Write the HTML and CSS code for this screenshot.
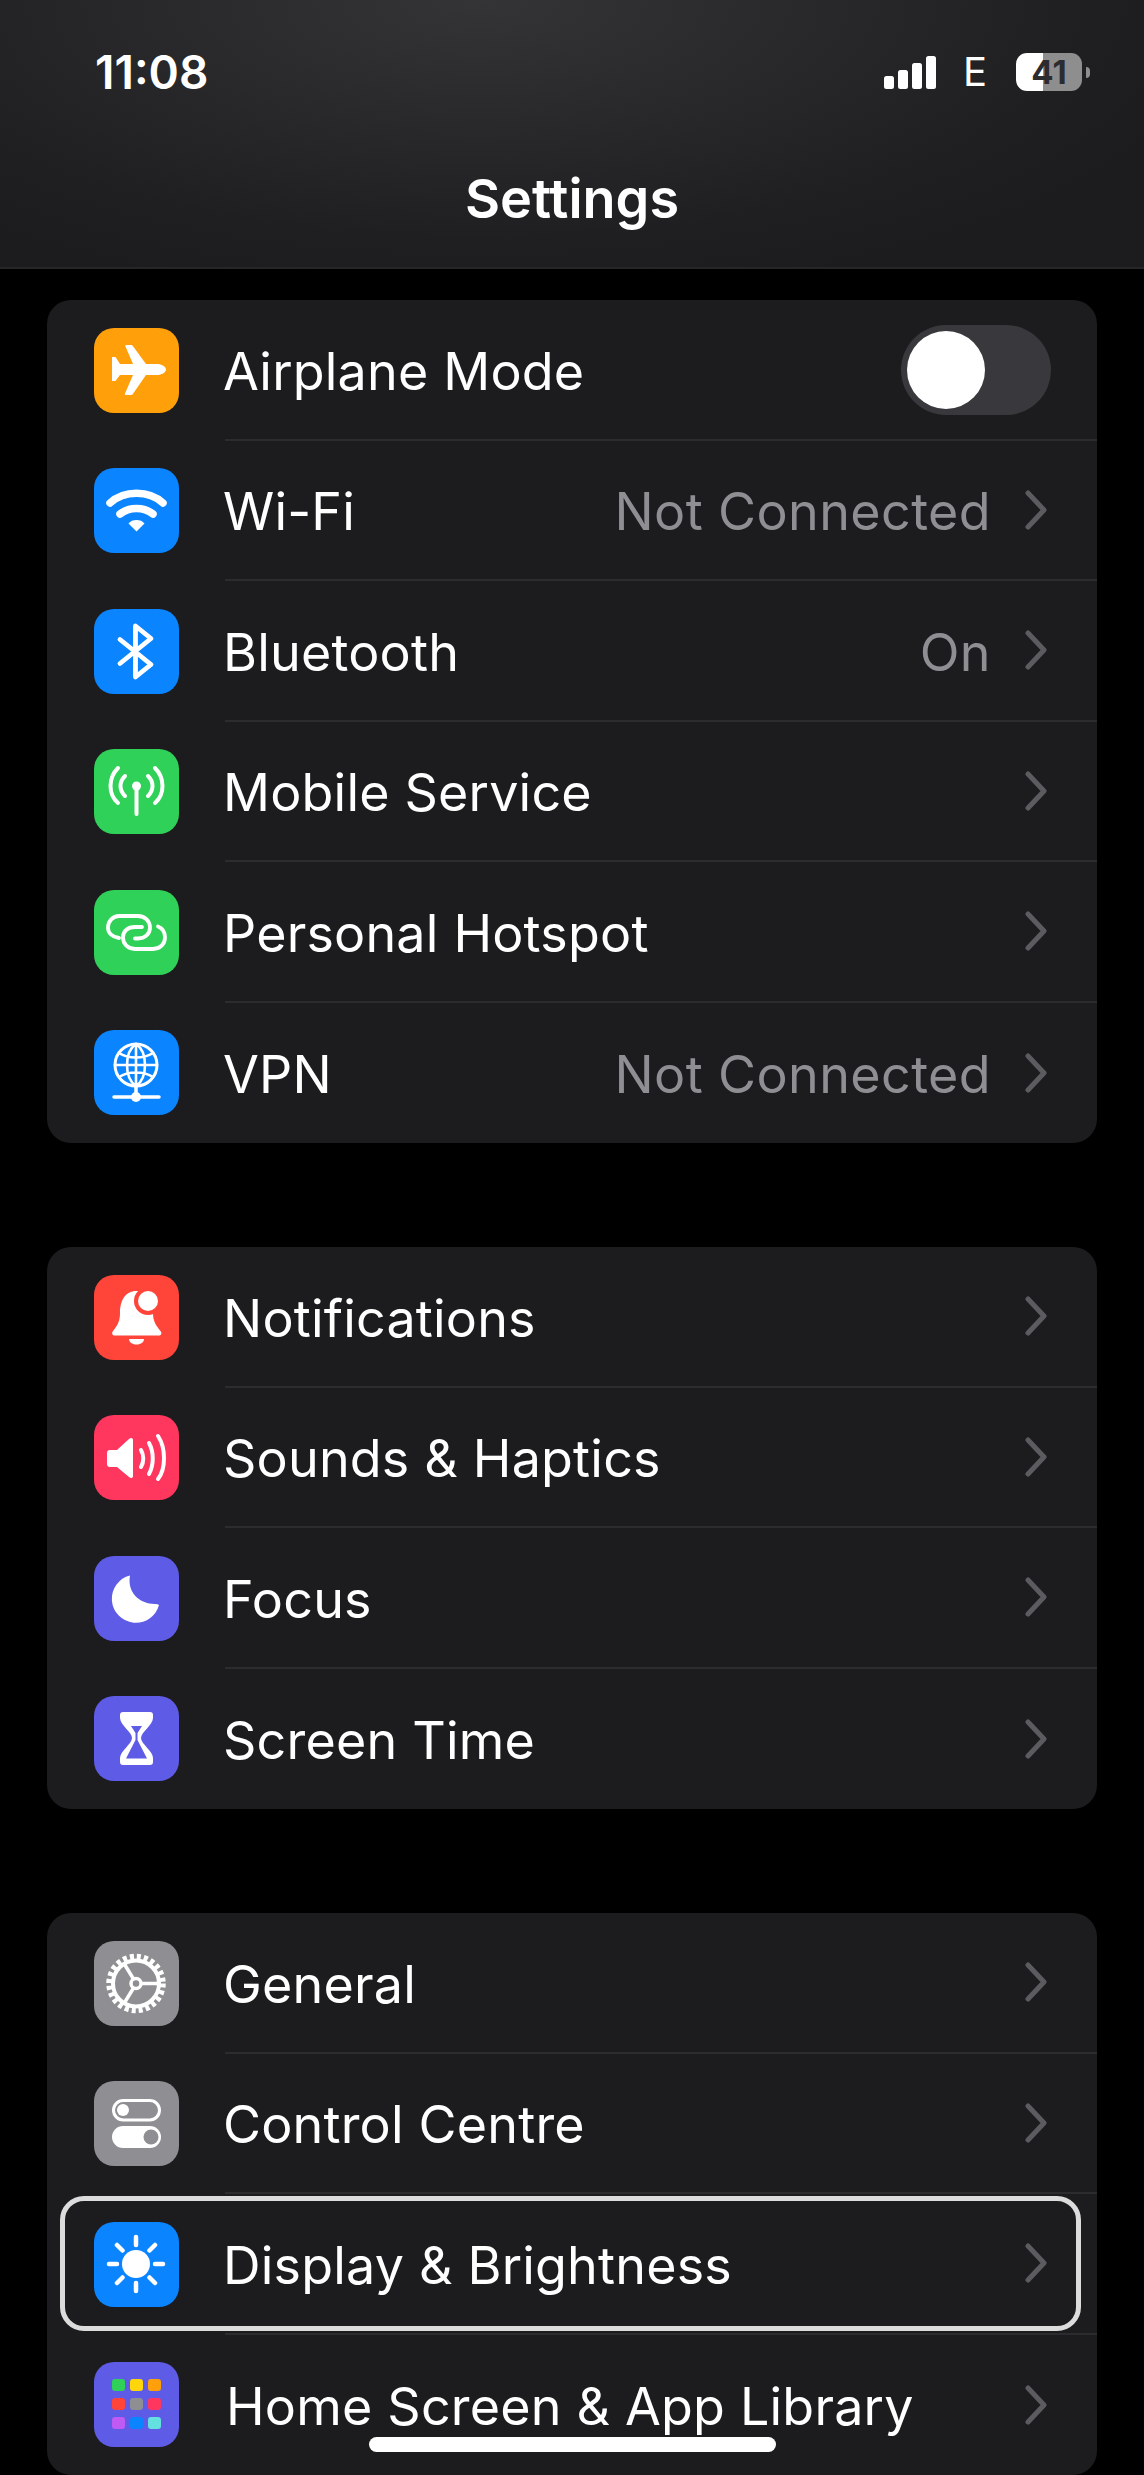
FILE: index.html
```html
<!DOCTYPE html>
<html>
<head>
  <title>Settings</title>
  <link rel="stylesheet" href="styles.css">
</head>
<body>
  <svg class="sprites">
    <symbol id="chev" viewBox="0 0 22 40">
      <polyline points="3,3 19,20 3,37" fill="none" stroke="currentColor" stroke-width="5" stroke-linecap="round" stroke-linejoin="round"/>
    </symbol>
  </svg>

  <header class="top">
    <div class="status">
      <span class="clock">11:08</span>
      <div class="status-right">
        <div class="signal"><i class="b1"></i><i class="b2"></i><i class="b3"></i><i class="b4"></i></div>
        <span class="net">E</span>
        <div class="battery"><span>41</span></div>
        <div class="nub"></div>
      </div>
    </div>
    <h1>Settings</h1>
  </header>

  <main>
    <section class="card">
      <div class="row">
        <div class="icon orange">
          <svg viewBox="0 0 85 85"><path fill="#fff" d="M72 41.500c0-3-4.500-5.500-9-5.500H52L38.500 17.500a2 2 0 0 0-1.500-.5h-4.500c-1 0-1.500.5-1 1.500L39 36H26l-3.500-5.500c-.5-1-1-1.500-2-1.500H18v24h2.500c1 0 1.500-.5 2-1.500L26 47h13l-8 18.500c-.5 1 0 1.500 1 1.500h5c.5 0 1-.2 1.500-.5L52 47h11c4.500 0 9-2.500 9-5.500z"/></svg>
        </div>
        <div class="row-main">
          <span class="label">Airplane Mode</span>
          <div class="toggle"><div class="knob"></div></div>
        </div>
      </div>
      <div class="row">
        <div class="icon blue">
          <svg viewBox="0 0 85 85"><g fill="none" stroke="#fff" stroke-width="7.500" stroke-linecap="round"><path d="M16 35C30 22 55 22 69 35"/><path d="M26 46C35 38.500 50 38.500 59 46"/></g><path fill="#fff" d="M42.500 52c3.500 0 6 1 8 3.500l-8 8-8-8c2-2.500 4.500-3.500 8-3.500z"/></svg>
        </div>
        <div class="row-main">
          <span class="label">Wi-Fi</span>
          <span class="value">Not Connected</span>
          <svg class="chev"><use href="#chev"/></svg>
        </div>
      </div>
      <div class="row">
        <div class="icon blue">
          <svg viewBox="0 0 85 85"><path fill="none" stroke="#fff" stroke-width="4.800" stroke-linecap="round" stroke-linejoin="round" d="M26 30.500L57 55.500 41.500 68V17L57 29.500 26 54.500"/></svg>
        </div>
        <div class="row-main">
          <span class="label">Bluetooth</span>
          <span class="value">On</span>
          <svg class="chev"><use href="#chev"/></svg>
        </div>
      </div>
      <div class="row">
        <div class="icon green">
          <svg viewBox="0 0 85 85"><g fill="none" stroke="#fff" stroke-width="4" stroke-linecap="round"><path d="M42.500 38V65"/><path d="M24 19C14 29 14 45 24 54"/><path d="M61 19C71 29 71 45 61 54"/><path d="M31 27C25 33 25 41 31 47"/><path d="M54 27C60 33 60 41 54 47"/></g><circle cx="42.500" cy="37" r="4.500" fill="#fff"/></svg>
        </div>
        <div class="row-main">
          <span class="label">Mobile Service</span>
          <svg class="chev"><use href="#chev"/></svg>
        </div>
      </div>
      <div class="row">
        <div class="icon green">
          <svg viewBox="0 0 85 85"><g fill="none" stroke="#fff" stroke-width="3.800" stroke-linecap="round"><path d="M25 48C18 47 14 43 14 37.500 14 31 19 26 25 26H44C51 26 56 31 56 37.500 56 44 51 48.500 44 48.500H41"/><path d="M64 36.500C68 38 71 42 71 47.500 71 54 66 59 59 59H41C34 59 29 54 29 47.500 29 41 34 37 41 37H48"/></g></svg>
        </div>
        <div class="row-main">
          <span class="label">Personal Hotspot</span>
          <svg class="chev"><use href="#chev"/></svg>
        </div>
      </div>
      <div class="row">
        <div class="icon blue">
          <svg viewBox="0 0 85 85"><g fill="none" stroke="#fff" stroke-linecap="round"><circle cx="42" cy="35" r="21" stroke-width="3"/><path stroke-width="2.600" d="M42 14C30 22 30 48 42 56M42 14C54 22 54 48 42 56M42 14V56M25 23C34 29 50 29 59 23M21 35H63M25 47C34 41 50 41 59 47"/><path stroke-width="3.500" d="M42 56V67M20 67H65"/></g><circle cx="42" cy="67" r="5" fill="#fff"/></svg>
        </div>
        <div class="row-main last">
          <span class="label">VPN</span>
          <span class="value">Not Connected</span>
          <svg class="chev"><use href="#chev"/></svg>
        </div>
      </div>
    </section>

    <section class="card">
      <div class="row">
        <div class="icon red">
          <svg viewBox="0 0 85 85"><path fill="#fff" d="M42.500 16C31 16 26 26 26 38c0 9-3 13-7 18-1.500 2-1 4.500 1.500 4.500H65c2.500 0 3-2.500 1.500-4.500-4-5-7.500-9-7.500-18 0-12-5-22-16.500-22z"/><path fill="#fff" d="M35 64H50C50 67 47 69.500 42.500 69.500S35 67 35 64z"/><circle cx="54" cy="26" r="14" fill="#ff453a"/><circle cx="54" cy="26" r="10" fill="#fff"/></svg>
        </div>
        <div class="row-main">
          <span class="label">Notifications</span>
          <svg class="chev"><use href="#chev"/></svg>
        </div>
      </div>
      <div class="row">
        <div class="icon pink">
          <svg viewBox="0 0 85 85"><path fill="#fff" d="M13 38c0-2 1-3 3-3h7l12-11c2-2 4-1 4 1v36c0 2-2 3-4 1L23 52h-7c-2 0-3-1-3-3z"/><g fill="none" stroke="#fff" stroke-width="4" stroke-linecap="round"><path d="M47 35C50 40 50 47 47 52"/><path d="M55 28C60 37 60 50 55 59"/><path d="M64 21C72 33 72 54 64 64"/></g></svg>
        </div>
        <div class="row-main">
          <span class="label">Sounds &amp; Haptics</span>
          <svg class="chev"><use href="#chev"/></svg>
        </div>
      </div>
      <div class="row">
        <div class="icon indigo">
          <svg viewBox="0 0 85 85"><path fill="#fff" d="M36 19.500A24 24 0 1 0 65 49C64 48 62.500 48 61 48 45 48 33 36 36 19.500z"/></svg>
        </div>
        <div class="row-main">
          <span class="label">Focus</span>
          <svg class="chev"><use href="#chev"/></svg>
        </div>
      </div>
      <div class="row">
        <div class="icon indigo">
          <svg viewBox="0 0 85 85"><path fill="#fff" d="M29 16H56a3 3 0 0 1 3 3v3c0 7-12 14-12 20s12 13 12 20v4a3 3 0 0 1-3 3H29a3 3 0 0 1-3-3v-4c0-7 12-14 12-20S26 29 26 22v-3a3 3 0 0 1 3-3z"/><path fill="#5e5ce6" d="M37 30H48L43.500 37V44L53 62.500H32L41.500 44V37z"/></svg>
        </div>
        <div class="row-main last">
          <span class="label">Screen Time</span>
          <svg class="chev"><use href="#chev"/></svg>
        </div>
      </div>
    </section>

    <section class="card">
      <div class="row">
        <div class="icon gray">
          <svg viewBox="0 0 85 85"><g fill="none" stroke="#fff"><circle cx="42" cy="42.500" r="26.500" stroke-width="6.500" stroke-dasharray="4 2.940"/><circle cx="42" cy="42.500" r="23" stroke-width="4"/><circle cx="42" cy="42.500" r="5" stroke-width="3.500"/><path stroke-width="3.500" d="M47 42.500H65M39.500 38L30 22.500M39.500 47L30 62.500"/></g></svg>
        </div>
        <div class="row-main">
          <span class="label">General</span>
          <svg class="chev"><use href="#chev"/></svg>
        </div>
      </div>
      <div class="row">
        <div class="icon gray">
          <svg viewBox="0 0 85 85"><rect x="19.500" y="19.500" width="46" height="19.500" rx="9.750" fill="none" stroke="#fff" stroke-width="3"/><circle cx="29" cy="29" r="6" fill="#fff"/><rect x="18" y="45" width="49" height="22" rx="11" fill="#fff"/><circle cx="57" cy="56" r="7.500" fill="#8e8e93"/></svg>
        </div>
        <div class="row-main">
          <span class="label">Control Centre</span>
          <svg class="chev"><use href="#chev"/></svg>
        </div>
      </div>
      <div class="row focused">
        <div class="icon blue">
          <svg viewBox="0 0 85 85"><circle cx="42" cy="42" r="14" fill="#fff"/><path fill="none" stroke="#fff" stroke-width="4.500" stroke-linecap="round" d="M42 15V23M42 61V69M15 42H23M61 42H69M23 23L28.500 28.500M55.500 55.500L61 61M61 23L55.500 28.500M28.500 55.500L23 61"/></svg>
        </div>
        <div class="row-main">
          <span class="label">Display &amp; Brightness</span>
          <svg class="chev"><use href="#chev"/></svg>
        </div>
      </div>
      <div class="row">
        <div class="icon indigo">
          <svg viewBox="0 0 85 85">
            <rect x="18" y="17" width="13" height="12" rx="3" fill="#30d158"/>
            <rect x="36" y="17" width="13" height="12" rx="3" fill="#ffd60a"/>
            <rect x="54" y="17" width="13" height="12" rx="3" fill="#ff9f0a"/>
            <rect x="18" y="36" width="13" height="12" rx="3" fill="#ff453a"/>
            <rect x="36" y="36" width="13" height="12" rx="3" fill="#8e8e93"/>
            <rect x="54" y="36" width="13" height="12" rx="3" fill="#ff375f"/>
            <rect x="18" y="55" width="13" height="12" rx="3" fill="#bf5af2"/>
            <rect x="36" y="55" width="13" height="12" rx="3" fill="#0a84ff"/>
            <rect x="54" y="55" width="13" height="12" rx="3" fill="#64e0e0"/>
          </svg>
        </div>
        <div class="row-main last">
          <span class="label home-label">Home Screen &amp; App Library</span>
          <svg class="chev"><use href="#chev"/></svg>
        </div>
      </div>
    </section>
  </main>

  <div class="home-bar"></div>
</body>
</html>
```

FILE: styles.css
```css
html, body {
  margin: 0;
  height: 2475px;
  overflow: hidden;
  background-color: #000;
  color: #fff;
  font-family: Inter, "Liberation Sans", sans-serif;
}

.sprites {
  display: none;
}

/* header */
.top {
  height: 269px;
  box-sizing: border-box;
  padding: 50px 54px 0 95px;
  background: radial-gradient(ellipse 760px 300px at 480px 0, #343436 0%, #1f1f21 80%, #1c1c1e 100%);
  border-bottom: 2px solid #262628;
}

.status {
  display: flex;
  justify-content: space-between;
  align-items: center;
  height: 44px;
}

.clock {
  font-size: 46px;
  font-weight: 600;
}

.status-right {
  display: flex;
  align-items: center;
}

.signal {
  display: flex;
  align-items: flex-end;
  gap: 4.500px;
  height: 33px;
  margin-top: 1px;
}

.signal i {
  display: block;
  width: 9.500px;
  background-color: #fff;
  border-radius: 2.500px;
}

.b1 { height: 13px; }
.b2 { height: 19px; }
.b3 { height: 26px; }
.b4 { height: 33px; }

.net {
  margin: 0 29px 0 27px;
  font-size: 40px;
  line-height: 40px;
  font-weight: 400;
}

.battery {
  width: 66px;
  height: 38px;
  border-radius: 11px;
  background: linear-gradient(to right, #fff 41%, #8e8e8e 41%);
  text-align: center;
}

.battery span {
  font-size: 33px;
  line-height: 38px;
  font-weight: 700;
  color: #2c2c30;
}

.nub {
  width: 4px;
  height: 11px;
  margin-left: 4px;
  border-radius: 0 6px 6px 0;
  background-color: #8e8e8e;
}

h1 {
  margin: 75px 0 0 -41px;
  text-align: center;
  font-size: 54px;
  line-height: 60px;
  font-weight: 600;
}

/* list */
main {
  padding: 31px 47px 0;
  display: flex;
  flex-direction: column;
  gap: 104px;
}

.card {
  background-color: #1c1c1e;
  border-radius: 24px;
}

.row {
  position: relative;
  display: flex;
  align-items: center;
  height: 140.500px;
  padding-left: 47px;
}

.icon {
  flex: none;
  width: 85px;
  height: 85px;
  margin-right: 46px;
  border-radius: 20px;
}

.icon svg {
  display: block;
  width: 85px;
  height: 85px;
}

.orange { background-color: #ff9f0a; }
.blue { background-color: #0a84ff; }
.green { background-color: #30d158; }
.red { background-color: #ff453a; }
.pink { background-color: #ff375f; }
.indigo { background-color: #5e5ce6; }
.gray { background-color: #8e8e93; }

.row-main {
  flex: 1;
  align-self: stretch;
  display: flex;
  align-items: center;
  padding-right: 50px;
  border-bottom: 2px solid #2c2c2e;
}

.row-main.last {
  border-bottom: none;
}

.label {
  flex: 1;
  padding-top: 4px;
  margin-left: -2px;
  font-size: 52px;
  letter-spacing: 0.200px;
  white-space: nowrap;
}

.home-label {
  padding-left: 3px;
}

.value {
  padding-top: 4px;
  margin-right: 34px;
  font-size: 52px;
  letter-spacing: 0.400px;
  color: #8e8e93;
}

.chev {
  flex: none;
  width: 22px;
  height: 40px;
  color: #5c5c60;
}

.toggle {
  width: 150px;
  height: 90px;
  margin-right: -4px;
  margin-top: 2px;
  box-sizing: border-box;
  padding: 6px 6px;
  border-radius: 45px;
  background-color: #39393d;
}

.knob {
  width: 78px;
  height: 78px;
  border-radius: 50%;
  background-color: #fff;
}

.focused::after {
  content: "";
  position: absolute;
  top: 2px;
  left: 13px;
  right: 16px;
  bottom: 4px;
  border: 5px solid #dcdcdc;
  border-radius: 24px;
  pointer-events: none;
}

.home-bar {
  position: absolute;
  left: 369px;
  top: 2437px;
  width: 407px;
  height: 15px;
  border-radius: 8px;
  background-color: #fff;
}
```
